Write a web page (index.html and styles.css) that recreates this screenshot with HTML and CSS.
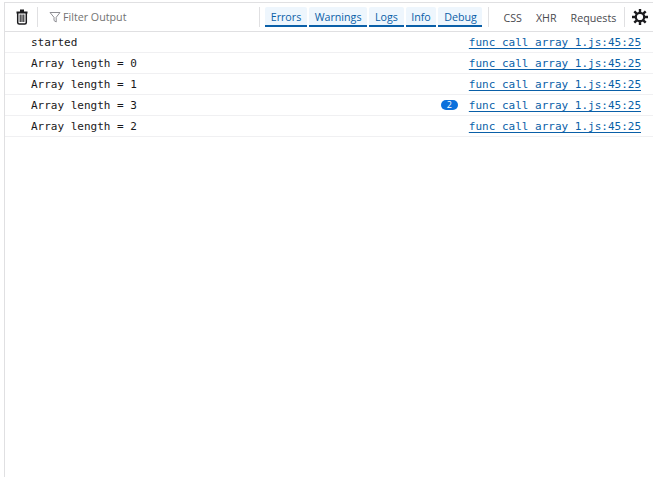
FILE: index.html
```html
<!DOCTYPE html>
<html lang="en">
<head>
<meta charset="utf-8">
<title>Console</title>
<link rel="stylesheet" href="styles.css">
</head>
<body>
<div class="console">
  <header class="toolbar">
    <button class="icon-btn trash" aria-label="Clear">
      <svg width="16" height="16" viewBox="0 0 16 16"><path d="M6 1.5h4M2.5 3.5h11" stroke="#1c1c1f" stroke-width="2" fill="none"/><path d="M3.7 4v9.5c0 .9.6 1.5 1.5 1.5h5.6c.9 0 1.5-.6 1.5-1.5V4" stroke="#1c1c1f" stroke-width="1.5" fill="none"/><path d="M6.2 5.5v7.5M8 5.5v7.5M9.8 5.5v7.5" stroke="#1c1c1f" stroke-width="1.1"/></svg>
    </button>
    <span class="sep"></span>
    <div class="filter">
      <svg width="12" height="12" viewBox="0 0 12 12"><path d="M1 1.5h10L7.2 6.3V11L5 9.5V6.3z" fill="none" stroke="#8f8f94" stroke-width="1"/></svg>
      <span>Filter Output</span>
    </div>
    <span class="sep"></span>
    <div class="levels">
      <span class="level">Errors</span>
      <span class="level">Warnings</span>
      <span class="level">Logs</span>
      <span class="level">Info</span>
      <span class="level">Debug</span>
    </div>
    <span class="sep sep-b"></span>
    <div class="kinds">
      <span class="kind">CSS</span>
      <span class="kind">XHR</span>
      <span class="kind">Requests</span>
    </div>
    <span class="sep sep-c"></span>
    <button class="icon-btn gear" aria-label="Settings">
      <svg width="16" height="16" viewBox="0 0 16 16"><circle cx="8" cy="8" r="4.2" fill="none" stroke="#1c1c1f" stroke-width="2.2"/><path d="M8 0v3.4M8 12.6V16M0 8h3.4M12.6 8H16M2.3 2.3l2.4 2.4M11.3 11.3l2.4 2.4M13.7 2.3l-2.4 2.4M4.7 11.3l-2.4 2.4" stroke="#1c1c1f" stroke-width="2.4"/></svg>
    </button>
  </header>
  <main class="log">
    <div class="row"><span class="msg">started</span><a class="src">func_call_array_1.js:45:25</a></div>
    <div class="row"><span class="msg">Array length = 0</span><a class="src">func_call_array_1.js:45:25</a></div>
    <div class="row"><span class="msg">Array length = 1</span><a class="src">func_call_array_1.js:45:25</a></div>
    <div class="row"><span class="msg">Array length = 3</span><span class="badge">2</span><a class="src">func_call_array_1.js:45:25</a></div>
    <div class="row"><span class="msg">Array length = 2</span><a class="src">func_call_array_1.js:45:25</a></div>
  </main>
</div>
</body>
</html>
```
FILE: styles.css
```css
* { box-sizing: border-box; }
html, body { margin: 0; height: 100%; background: #fff; }
body { padding-top: 2px; overflow: hidden; }
.console {
  height: 475px;
  margin-left: 4px;
  border-left: 1px solid #e0e0e2;
  border-top: 1px solid #e0e0e2;
  font-family: "Open Sans", sans-serif;
  font-size: 10.7px;
}
.toolbar {
  height: 29px;
  display: flex;
  align-items: center;
  border-bottom: 1px solid #e0e0e2;
  background: #fff;
}
.icon-btn {
  padding: 0;
  border: 0;
  background: none;
  display: flex;
}
.trash { margin-left: 9px; }
.sep {
  width: 1px;
  height: 20px;
  background: #e0e0e2;
  margin-left: 7px;
}
.filter {
  width: 210px;
  display: flex;
  align-items: center;
  gap: 2px;
  margin-left: 11px;
  margin-right: -7px;
  color: #737373;
}
.levels { display: flex; gap: 2px; margin-left: 5px; }
.level {
  height: 20px;
  padding: 1px 5.7px 0;
  display: flex;
  align-items: center;
  color: #0a5fa8;
  background: #eef6fd;
  border-bottom: 2px solid #0a5fa8;
  border-radius: 2px 2px 0 0;
}
.sep-b { margin-left: 6px; }
.kinds { display: flex; gap: 14px; margin-left: 14px; padding-top: 1px; color: #4a4a4f; }
.sep-c { margin-left: 8px; }
.gear { margin-left: 7px; }
.log {
  font-family: "DejaVu Sans Mono", monospace;
  font-size: 11px;
}
.row {
  height: 21px;
  display: flex;
  align-items: center;
  padding: 0 12px 0 26px;
  border-bottom: 1px solid #f0f0f2;
  color: #18181a;
}
.msg { flex: 1; }
.src {
  color: #0a5fa8;
  text-decoration: underline;
  text-decoration-skip-ink: none;
  text-underline-offset: 2px;
}
.badge {
  width: 17px;
  height: 10px;
  margin-right: 11px;
  border-radius: 5px;
  background: #0a70dc;
  color: #fff;
  font-family: "Open Sans", sans-serif;
  font-size: 9px;
  line-height: 10px;
  text-align: center;
}
```
